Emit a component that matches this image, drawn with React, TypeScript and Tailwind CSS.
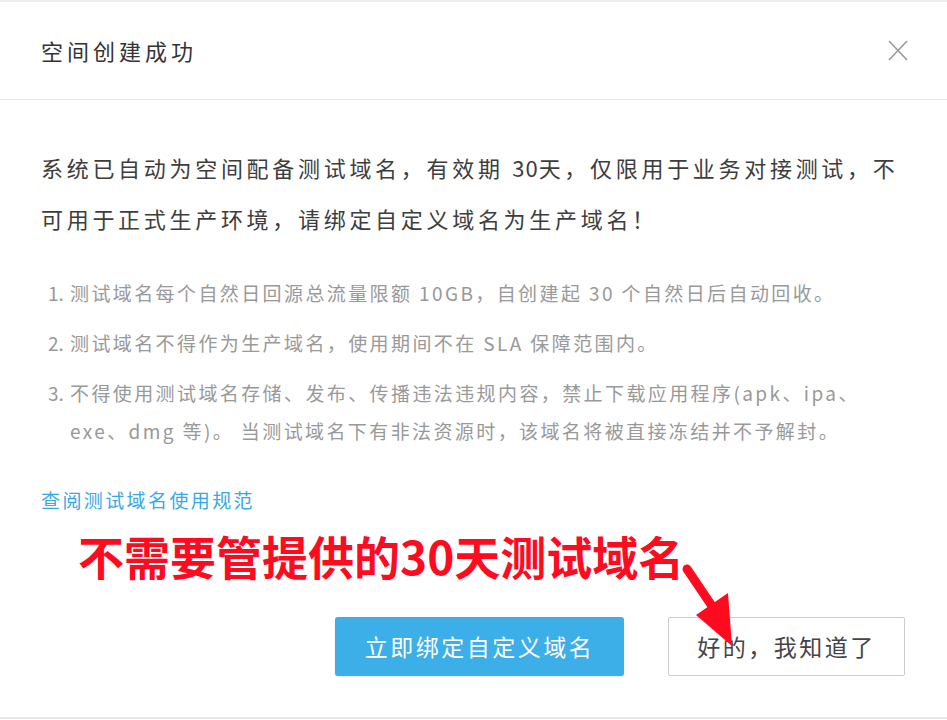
import React from "react";

const font = { fontFamily: '"Noto Sans CJK SC", "Noto Sans", sans-serif' };

const rules = [
  "测试域名每个自然日回源总流量限额 10GB，自创建起 30 个自然日后自动回收。",
  "测试域名不得作为生产域名，使用期间不在 SLA 保障范围内。",
  "不得使用测试域名存储、发布、传播违法违规内容，禁止下载应用程序(apk、ipa、exe、dmg 等)。 当测试域名下有非法资源时，该域名将被直接冻结并不予解封。",
];

function CloseIcon() {
  return (
    <svg width="20" height="21" viewBox="0 0 20 21" fill="none">
      <path d="M1 1L19 20M19 1L1 20" stroke="#9a9a9a" strokeWidth="1.6" />
    </svg>
  );
}

function Arrow() {
  return (
    <svg width="80" height="95" viewBox="0 0 80 95" fill="none">
      <path d="M17 12L44 52" stroke="#ff0a1f" strokeWidth="9" strokeLinecap="round" />
      <path d="M26 58L58 36L62 89Z" fill="#ff0a1f" />
    </svg>
  );
}

export default function App() {
  return (
    <div
      className="relative w-[947px] h-[720px] bg-white flex flex-col border-t-2 border-[#eeeeee] overflow-hidden"
      style={font}
    >
      <header className="h-[98px] shrink-0 flex items-center justify-between pl-[41px] pr-[39px] border-b border-[#e6e6e6]">
        <h2 className="text-[22px] tracking-[4px] text-[#333333]">空间创建成功</h2>
        <button type="button" aria-label="关闭">
          <CloseIcon />
        </button>
      </header>

      <section className="flex-1 flex flex-col px-[41px] pt-[42px]">
        <p className="text-[22px] leading-[51px] tracking-[3.7px] text-[#3d3d3d]">
          系统已自动为空间配备测试域名，有效期 <span className="tracking-[1px]">30</span>天，仅限用于业务对接测试，不可用于正式生产环境，请绑定自定义域名为生产域名！
        </p>

        <ol className="mt-[30px] ml-[7px] flex flex-col gap-[12px] text-[19px] leading-[38px] tracking-[2.4px] text-[#999999]">
          {rules.map((r, i) => (
            <li key={i} className="flex">
              <span className="w-[22px] shrink-0 tracking-normal">{i + 1}.</span>
              <span>{r}</span>
            </li>
          ))}
        </ol>

        <a href="#" className="mt-[35px] self-start text-[19px] leading-[30px] tracking-[2.4px] text-[#3aa8e2]">
          查阅测试域名使用规范
        </a>

        <div className="mt-auto flex justify-end gap-[44px] pb-[41px] pr-[1px]">
          <button
            type="button"
            className="w-[289px] h-[59px] rounded-[3px] bg-[#3caee8] text-white text-[23px] tracking-[2.5px] shadow-[0_1px_2px_rgba(0,0,0,0.12)]"
          >
            立即绑定自定义域名
          </button>
          <button
            type="button"
            className="w-[237px] h-[59px] rounded-[2px] border border-[#cccccc] bg-white text-[#444444] text-[23px] tracking-[2.5px]"
          >
            好的，我知道了
          </button>
        </div>
      </section>

      <div className="h-[2px] bg-[#e6e6e6] shrink-0 mb-[1px]" />

      <div className="absolute left-[78px] top-[530px] text-[46px] leading-none font-bold text-[#ff0a1f]">
        不需要管提供的30天测试域名
      </div>
      <div className="absolute left-[670px] top-[555px]">
        <Arrow />
      </div>
    </div>
  );
}
